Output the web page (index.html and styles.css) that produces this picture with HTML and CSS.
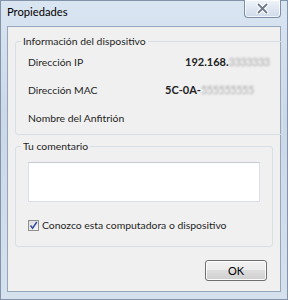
FILE: index.html
```html
<!DOCTYPE html>
<html lang="es">
<head>
  <meta charset="UTF-8" />
  <title>Propiedades</title>
  <link rel="stylesheet" href="styles.css">
</head>
<body>
  <div class="window">
    <!-- barra de título -->
    <div class="titlebar">
      <span class="title">Propiedades</span>
      <div class="close-btn">
        <svg width="13" height="11" viewBox="0 0 13 11">
          <path d="M2.5 1.5 L10.5 9.5 M10.5 1.5 L2.5 9.5" stroke="#fff" stroke-width="4" stroke-linecap="round"/>
          <path d="M2.5 1.5 L10.5 9.5 M10.5 1.5 L2.5 9.5" stroke="#6f7a8a" stroke-width="1.8" stroke-linecap="round"/>
        </svg>
      </div>
    </div>

    <div class="client">
      <fieldset class="group">
        <legend>Información del dispositivo</legend>
        <div class="row">
          <span class="label">Dirección IP</span>
          <span class="value ip">192.168.<span class="blur">3333333</span></span>
        </div>
        <div class="row">
          <span class="label">Dirección MAC</span>
          <span class="value mac">5C-0A-<span class="blur">555555555</span></span>
        </div>
        <div class="row">
          <span class="label">Nombre del Anfitrión</span>
        </div>
      </fieldset>

      <fieldset class="group comment">
        <legend>Tu comentario</legend>
        <div class="textbox"></div>
        <label class="check">
          <span class="box">
            <svg width="9" height="9" viewBox="0 0 9 9">
              <path d="M1.5 4.5 L3.6 7.2 L7.8 1" fill="none" stroke="#3a4f9c" stroke-width="1.6"/>
            </svg>
          </span>
          Conozco esta computadora o dispositivo
        </label>
      </fieldset>

      <div class="buttons">
        <button class="btn">OK</button>
      </div>
    </div>
  </div>
</body>
</html>
```

FILE: styles.css
```css
body {
  margin: 0;
  font-family: Lato, "Noto Sans", sans-serif;
  font-size: 10.4px;
  line-height: 14px;
  color: #1e1e1e;
  background: #fff;
}

/* Ventana */
.window {
  width: 288px;
  height: 300px;
  box-sizing: border-box;
  border: 1px solid #8293aa;
  background: linear-gradient(to bottom, #dae5f2 0%, #cbd8e8 40%, #d6e1ee 100%);
  display: flex;
  flex-direction: column;
  position: relative;
}

.titlebar {
  height: 25px;
  box-sizing: border-box;
  padding: 0 0 3px 6px;
  display: flex;
  align-items: center;
}

.title {
  color: #000;
  font-size: 11.2px;
}

.close-btn {
  position: absolute;
  top: -1px;
  right: 6px;
  width: 37px;
  height: 18px;
  box-sizing: border-box;
  border: 1px solid #7d8ea6;
  border-top: none;
  border-radius: 0 0 4px 4px;
  background: linear-gradient(to bottom, #f0f4fa, #cfdaea);
  box-shadow: inset 0 0 0 1px rgba(255, 255, 255, 0.7);
  display: flex;
  align-items: center;
  justify-content: center;
}

/* Área cliente */
.client {
  flex: 1;
  margin: 0 6px 7px;
  background: #f0f0f0;
  border: 1px solid #96a6bb;
  padding: 7px 7px 0;
  display: flex;
  flex-direction: column;
}

.group {
  margin: 0;
  border: 1px solid #d5dfe5;
  border-radius: 3px;
  padding: 0 12px;
}

.group legend {
  padding: 0 2px;
  margin-left: -7px;
  color: #1e1e1e;
}

.row {
  height: 28px;
  display: flex;
  align-items: center;
}

.row:last-child {
  margin-bottom: 2px;
}

.label {
  width: 137px;
}

.value {
  font-weight: bold;
  font-size: 11px;
  color: #222;
  white-space: nowrap;
}

.ip {
  margin-left: 20px;
}

.blur {
  color: #a9a9a9;
  filter: blur(1.2px);
  font-weight: normal;
  letter-spacing: -0.5px;
}

.comment {
  margin-top: 4px;
  padding-bottom: 14px;
}

.textbox {
  margin-top: 9px;
  height: 38px;
  background: #fff;
  border: 1px solid #dbdfe6;
  border-top-color: #c5cbd4;
}

.check {
  display: flex;
  align-items: center;
  gap: 3px;
  margin-top: 16px;
  white-space: nowrap;
}

.box {
  width: 11px;
  height: 11px;
  box-sizing: border-box;
  border: 1px solid #8f8f8f;
  background: linear-gradient(135deg, #dcdcdc, #f9f9f9);
  display: flex;
  align-items: center;
  justify-content: center;
}

.buttons {
  display: flex;
  justify-content: flex-end;
  padding: 13px 6px 0 0;
}

.btn {
  width: 62px;
  height: 21px;
  font-family: inherit;
  font-size: 11px;
  color: #000;
  border: 1px solid #707070;
  border-radius: 3px;
  background: linear-gradient(to bottom, #f2f2f2 0%, #ebebeb 49%, #dddddd 50%, #cfcfcf 100%);
  box-shadow: inset 0 0 0 1px #fcfcfc;
}
```
